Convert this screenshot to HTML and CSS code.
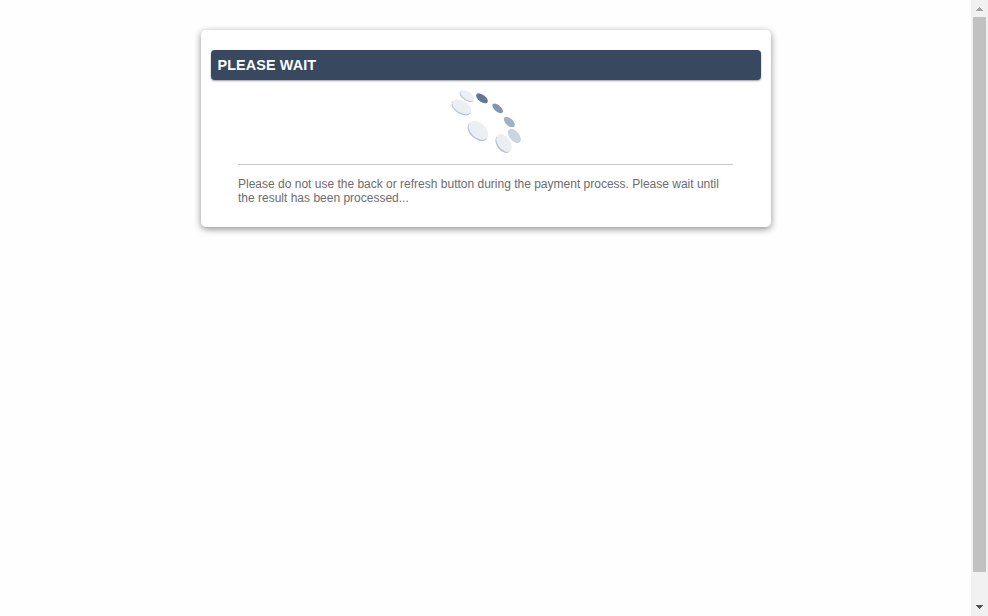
FILE: index.html
```html
<!DOCTYPE html>
<html lang="en">
<head>
<meta charset="utf-8">
<title>Please wait</title>
<link rel="stylesheet" href="styles.css">
</head>
<body>
<main class="page">
  <section class="card">
    <h1 class="title">PLEASE WAIT</h1>
    <svg class="spinner" viewBox="0 0 270 240" aria-hidden="true">
      <g fill="#b5c2d2">
        <ellipse transform="translate(79.500 43) rotate(35)" rx="24" ry="12"/>
        <ellipse transform="translate(63.500 77.500) rotate(32)" rx="32" ry="18"/>
        <ellipse transform="translate(112.500 148.500) rotate(43)" rx="35" ry="22"/>
        <ellipse transform="translate(189.500 186) rotate(54)" rx="30" ry="19"/>
      </g>
      <g fill="#ebeff4">
        <ellipse transform="translate(81.500 40.500) rotate(35)" rx="24" ry="12"/>
        <ellipse transform="translate(65 74) rotate(32)" rx="31" ry="18"/>
        <ellipse transform="translate(115 145) rotate(43)" rx="34" ry="22"/>
        <ellipse transform="translate(192 183) rotate(54)" rx="30" ry="18.500"/>
      </g>
      <ellipse fill="#627896" transform="translate(126 49) rotate(37)" rx="20.500" ry="10.500"/>
      <ellipse fill="#8295b1" transform="translate(173 79) rotate(41)" rx="19.500" ry="9.500"/>
      <ellipse fill="#a3b1c7" transform="translate(208 120) rotate(43)" rx="20" ry="11"/>
      <ellipse fill="#cbd4e1" transform="translate(223 162) rotate(49)" rx="25" ry="14.500"/>
    </svg>
    <p class="message">Please do not use the back or refresh button during the payment process. Please wait until the result has been processed...</p>
  </section>
</main>
<div class="scrollbar">
  <svg class="arrow" viewBox="0 0 17 17" shape-rendering="crispEdges"><path fill="#a3a3a3" d="M8 7h1v1h1v1h1v1h1v1H5v-1h1V9h1V8h1z"/></svg>
  <div class="thumb"></div>
  <svg class="arrow" viewBox="0 0 17 17" shape-rendering="crispEdges"><path fill="#505050" d="M5 6h7v1h-1v1h-1v1H9v1H8V9H7V8H6V7H5z"/></svg>
</div>
</body>
</html>
```
FILE: styles.css
```css
* { box-sizing: border-box; }
body {
  margin: 0;
  display: flex;
  height: 616px;
  overflow: hidden;
  background: #fefefe;
  font-family: Arial, "Liberation Sans", sans-serif;
}
.page { flex: 1; padding: 30px 0 0 1px; }
.card {
  width: 570px;
  height: 197px;
  margin: 0 auto;
  padding: 20px 10px 0;
  background: #fff;
  border-radius: 5px;
  box-shadow: 0 2px 7px rgba(0, 0, 0, .45);
}
.title {
  height: 30px;
  margin: 0;
  padding-left: 6.5px;
  border-radius: 4px;
  background: #37485f;
  box-shadow: 0 1px 2px rgba(0, 0, 0, .4);
  color: #fff;
  font-size: 14.4px;
  line-height: 30px;
  letter-spacing: .1px;
}
.spinner {
  display: block;
  width: 90px;
  height: 80px;
  margin: 2px 0 0 229px;
}
.message {
  width: 495px;
  margin: 2px 0 0 27px;
  padding-top: 12px;
  border-top: 1px solid #c8c8c8;
  color: #6c6c6c;
  font-size: 12px;
  line-height: 14px;
}
.scrollbar {
  display: flex;
  flex-direction: column;
  justify-content: space-between;
  width: 17px;
  background: #f1f1f1;
}
.arrow { display: block; width: 17px; height: 17px; }
.thumb { height: 555px; margin: 0 2px auto; background: #c1c1c1; }
```
